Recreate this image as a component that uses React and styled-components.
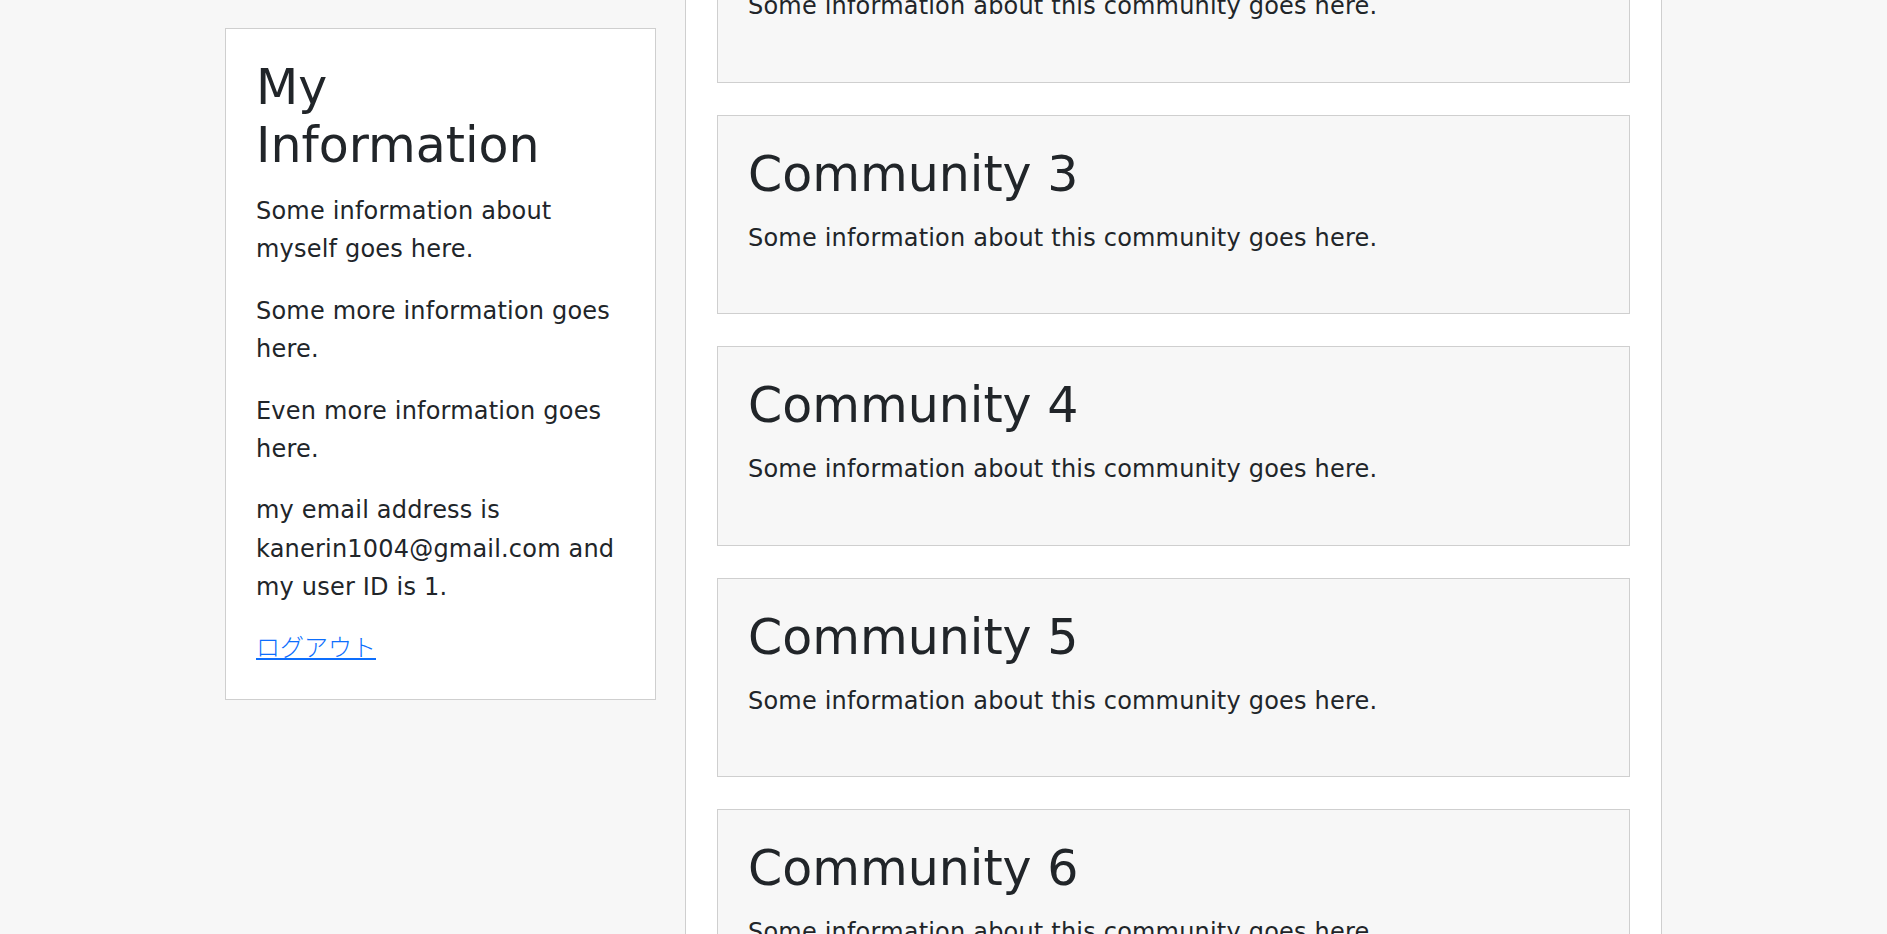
import React from 'react'
import styled, { createGlobalStyle } from 'styled-components'

const GlobalStyle = createGlobalStyle`
  html, body {
    margin: 0;
    padding: 0;
    height: 100%;
    overflow: hidden;
    background-color: #f7f7f7;
  }
  body {
    font-family: 'DejaVu Sans', 'Noto Sans CJK JP', sans-serif;
    font-size: 24px;
    line-height: 1.6;
    color: #212529;
  }
`

const Page = styled.div`
  height: 100vh;
  overflow: hidden;
`

const Row = styled.div`
  display: flex;
  align-items: flex-start;
  justify-content: center;
  gap: 29px;
`

const Sidebar = styled.aside`
  flex: none;
  width: 431px;
  box-sizing: border-box;
  margin-top: 28px;
  padding: 30px 30px 37px;
  background-color: #fff;
  border: 1px solid #cfcfcf;
`

// the feed is shown scrolled, so its top sits above the window
const Feed = styled.main`
  flex: none;
  width: 977px;
  box-sizing: border-box;
  margin-top: -380px;
  padding: 32px 31px;
  background-color: #fff;
  border-left: 1px solid #cfcfcf;
  border-right: 1px solid #cfcfcf;
  display: flex;
  flex-direction: column;
  gap: 32px;
`

const Title = styled.h2`
  margin: 0 0 ${({ spaced }) => (spaced ? '17px' : '15px')};
  font-size: 49px;
  font-weight: 400;
  line-height: 58px;
`

const Text = styled.p`
  margin: 0 0 23px;
  letter-spacing: 0.2px;
  &:last-child {
    margin-bottom: ${({ keepMargin }) => (keepMargin ? '23px' : '0')};
  }
`

const LinkLine = styled.p`
  margin: 0;
  font-family: 'Noto Sans CJK JP', sans-serif;
  line-height: 32px;
`

const Logout = styled.a`
  color: #0d6efd;
  text-decoration: underline;
  font-weight: 300;
  cursor: pointer;
`

const Card = styled.section`
  box-sizing: border-box;
  padding: 30px 30px 33px;
  background-color: #f7f7f7;
  border: 1px solid #cfcfcf;
`

const INFO = [
  'Some information about myself goes here.',
  'Some more information goes here.',
  'Even more information goes here.',
  'my email address is kanerin1004@gmail.com and my user ID is 1.',
]

const COMMUNITIES = [1, 2, 3, 4, 5, 6, 7]

export default function App() {
  return (
    <Page>
      <GlobalStyle />
      <Row>
        <Sidebar>
          <Title spaced>My Information</Title>
          {INFO.map((line, index) => (
            <Text key={index}>{line}</Text>
          ))}
          <LinkLine>
            <Logout href="#">ログアウト</Logout>
          </LinkLine>
        </Sidebar>
        <Feed>
          {COMMUNITIES.map((n) => (
            <Card key={n}>
              <Title>Community {n}</Title>
              <Text keepMargin>Some information about this community goes here.</Text>
            </Card>
          ))}
        </Feed>
      </Row>
    </Page>
  )
}
